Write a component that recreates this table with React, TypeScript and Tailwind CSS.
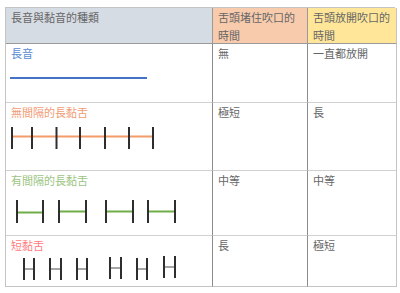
import React from 'react';

const font = { fontFamily: '"Noto Sans CJK TC", "Noto Sans CJK SC", sans-serif' };

type Tick = [number, number];

function Label({ text, color }: { text: string; color: string }) {
  return <div className={`h-[18px] leading-[18px] ${color}`}>{text}</div>;
}

export default function App() {
  // x pairs for the short-tongue "H" marks, with a small vertical nudge
  const shortH: [number, number, number][] = [
    [18, 28, 0],
    [44, 55, 0],
    [71, 81, 0],
    [104, 115, -1],
    [131, 141, 0],
    [158, 169, -2],
  ];
  const gapped: Tick[] = [
    [11, 37],
    [53, 80],
    [100, 127],
    [142, 169],
  ];
  const ticks = [6, 26, 50.5, 74, 99, 123, 147];

  return (
    <div className="w-[400px] h-[293px] bg-white" style={font}>
      <div className="ml-[5px] pt-[7px]">
        <div className="w-[390px] border-l border-t border-[#c4c4c4] grid grid-cols-[207px_95px_89px] grid-rows-[36px_59px_68px_65px_51px] text-[11px] text-[#666]">
          {/* header */}
          <div className="bg-[#d6dce4] border-r border-b border-r-[#9a9a9a] border-b-[#9a9a9a] px-[5px] pt-[0px] leading-[18px]">
            長音與黏音的種類
          </div>
          <div className="bg-[#f8cbad] border-r border-b border-r-[#9a9a9a] border-b-[#9a9a9a] px-[5px] leading-[18px]">
            舌頭堵住吹口的時間
          </div>
          <div className="bg-[#ffe699] border-r border-b border-r-[#c4c4c4] border-b-[#9a9a9a] px-[5px] leading-[18px]">
            舌頭放開吹口的時間
          </div>

          {/* 長音 */}
          <div className="border-r border-b border-r-[#8c8c8c] border-b-[#d0d0d0] px-[5px] flex flex-col">
            <Label text="長音" color="text-[#5b8bd6]" />
            <svg width="200" height="40" className="-ml-[5px]">
              <line x1="4" y1="16" x2="141" y2="16" stroke="#4472c4" strokeWidth="2" />
            </svg>
          </div>
          <div className="border-r border-b border-r-[#8c8c8c] border-b-[#d0d0d0] px-[5px] leading-[18px]">無</div>
          <div className="border-r border-b border-r-[#c4c4c4] border-b-[#d0d0d0] px-[5px] leading-[18px]">一直都放開</div>

          {/* 無間隔的長黏舌 */}
          <div className="border-r border-b border-r-[#8c8c8c] border-b-[#d0d0d0] px-[5px] flex flex-col">
            <Label text="無間隔的長黏舌" color="text-[#f19b74]" />
            <svg width="200" height="49" className="-ml-[5px]">
              <line x1="6" y1="15.5" x2="147" y2="15.5" stroke="#f39c6b" strokeWidth="2" />
              {ticks.map((x) => (
                <line key={x} x1={x} y1="6" x2={x} y2="28" stroke="#2e2e2e" strokeWidth="2" />
              ))}
            </svg>
          </div>
          <div className="border-r border-b border-r-[#8c8c8c] border-b-[#d0d0d0] px-[5px] leading-[18px]">極短</div>
          <div className="border-r border-b border-r-[#c4c4c4] border-b-[#d0d0d0] px-[5px] leading-[18px]">長</div>

          {/* 有間隔的長黏舌 */}
          <div className="border-r border-b border-r-[#8c8c8c] border-b-[#d0d0d0] px-[5px] flex flex-col">
            <Label text="有間隔的長黏舌" color="text-[#9cc47f]" />
            <svg width="200" height="46" className="-ml-[5px]">
              {gapped.map(([a, b], i) => (
                <g key={a}>
                  <line x1={a} y1={i === 0 ? 23.5 : 22.5} x2={b} y2={i === 0 ? 23.5 : 22.5} stroke="#70ad47" strokeWidth="2" />
                  <line x1={a} y1="11" x2={a} y2="34" stroke="#2e2e2e" strokeWidth="2" />
                  <line x1={b} y1="11" x2={b} y2="34" stroke="#2e2e2e" strokeWidth="2" />
                </g>
              ))}
            </svg>
          </div>
          <div className="border-r border-b border-r-[#8c8c8c] border-b-[#d0d0d0] px-[5px] leading-[18px]">中等</div>
          <div className="border-r border-b border-r-[#c4c4c4] border-b-[#d0d0d0] px-[5px] leading-[18px]">中等</div>

          {/* 短黏舌 */}
          <div className="border-r border-b border-r-[#8c8c8c] border-b-[#c4c4c4] px-[5px] flex flex-col">
            <Label text="短黏舌" color="text-[#ff7c80]" />
            <svg width="200" height="32" className="-ml-[5px]">
              {shortH.map(([a, b, dy]) => (
                <g key={a}>
                  <line x1={a} y1={15 + dy} x2={b} y2={15 + dy} stroke="#a6a6a6" strokeWidth="2" />
                  <line x1={a} y1={4 + dy} x2={a} y2={26 + dy} stroke="#2e2e2e" strokeWidth="2" />
                  <line x1={b} y1={4 + dy} x2={b} y2={26 + dy} stroke="#2e2e2e" strokeWidth="2" />
                </g>
              ))}
            </svg>
          </div>
          <div className="border-r border-b border-r-[#8c8c8c] border-b-[#c4c4c4] px-[5px] leading-[18px]">長</div>
          <div className="border-r border-b border-r-[#c4c4c4] border-b-[#c4c4c4] px-[5px] leading-[18px]">極短</div>
        </div>
      </div>
    </div>
  );
}
